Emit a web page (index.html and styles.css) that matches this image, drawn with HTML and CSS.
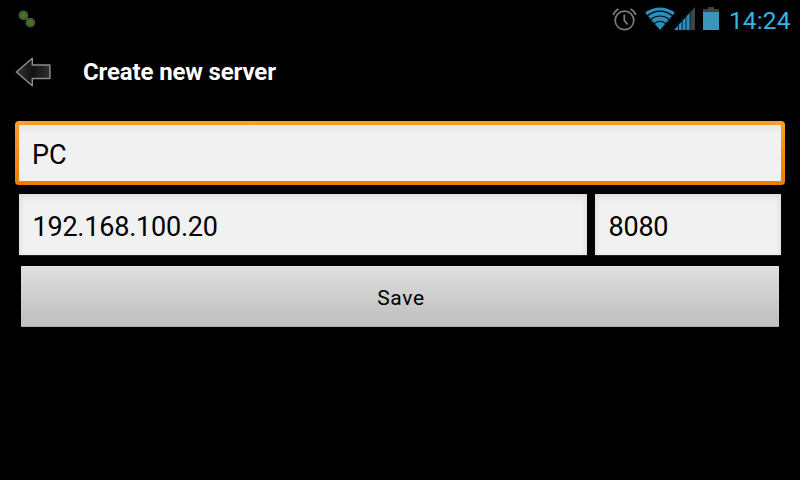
FILE: index.html
```
<!DOCTYPE html>
<html lang="en">
<head>
<meta charset="utf-8">
<title>Create new server</title>
<link rel="stylesheet" href="styles.css">
</head>
<body>
<header class="status">
  <svg class="notify" width="20" height="20" viewBox="0 0 20 20"><g fill="#3f7d02" stroke="#4a5048" stroke-width="2"><circle cx="6.4" cy="6.3" r="3.9"/><circle cx="13.4" cy="13.6" r="3.9"/></g><path d="M8.5 10.2Q10 9.4 11.4 9.8" stroke="#4a5048" stroke-width="2" fill="none"/></svg>
  <svg class="alarm" width="26" height="26" viewBox="0 0 26 26" fill="none" stroke="#7c7c7c" stroke-width="1.7"><circle cx="12.5" cy="13.4" r="9.3"/><path d="M12.3 7.5v6l3.3 4M1.2 8Q2.5 4 6.5 2M18.5 2Q22.5 4 23.8 8"/></svg>
  <svg class="wifi" width="30" height="24" viewBox="0 0 30 24"><path d="M0 5.5Q15-4.5 30 5.5L15 23Z" fill="#2b8fbd"/><g fill="none" stroke="#000" stroke-width="1.1"><path d="M2 9Q15-.7 28 9M5 13Q15 5 25 13M8.5 17Q15 11.5 21.5 17"/></g></svg>
  <svg class="signal" width="22" height="24" viewBox="0 0 22 24"><path d="M16 5.5L21 0V23H16Z" fill="#424242"/><path d="M0 23L16 5.5V23Z" fill="#2b8fbd"/><path d="M4.5 15v8M8.2 11v12M12 8v15M16 4v19" stroke="#0b2633" stroke-width="1"/></svg>
  <svg class="battery" width="16" height="24" viewBox="0 0 16 24"><path d="M5 0h6v2h5v4H0V2h5Z" fill="#424242"/><path d="M0 5h16V23H0Z" fill="#3995ba"/></svg>
  <time class="clock">14:24</time>
</header>
<nav class="bar">
  <svg class="back" width="36" height="30" viewBox="0 0 36 30"><defs><linearGradient id="g" x2="1" y2="0"><stop stop-color="#333"/><stop offset=".5" stop-color="#121212"/><stop offset="1" stop-color="#303030"/></linearGradient></defs><path d="M1.4 15L17.3 1.2V8H34.9V21.5H17.3V28.8Z" fill="url(#g)" stroke="#8c8c8c" stroke-width="1.5" stroke-linejoin="round"/></svg>
  <h1 class="title">Create new server</h1>
</nav>
<main class="form">
  <div class="field focused"><span class="value">PC</span></div>
  <div class="row">
    <div class="field"><span class="value digits">192.168.100.20</span></div>
    <div class="field port"><span class="value digits">8080</span></div>
  </div>
  <button class="save">Save</button>
</main>
</body>
</html>
```
FILE: styles.css
```
* { box-sizing: border-box; }
body {
  margin: 0;
  height: 480px;
  overflow: hidden;
  background: #000;
  font-family: Roboto, sans-serif;
}
.status {
  display: flex;
  align-items: flex-start;
  height: 38px;
  padding: 7px 7px 0 17px;
}
.notify { margin-top: 2px; }
.alarm { margin-left: auto; }
.wifi { margin-left: 7px; }
.signal { margin-left: -1px; }
.battery { margin-left: 7px; }
.clock {
  width: 64px;
  margin-left: 10px;
  color: #33b5e5;
  font-size: 24.5px;
  line-height: 27px;
  letter-spacing: .1px;
  white-space: nowrap;
}
.bar {
  display: flex;
  align-items: center;
  height: 68px;
  padding-left: 15px;
}
.title {
  margin: 0 0 0 32px;
  color: #fff;
  font-size: 24px;
  line-height: 28px;
  font-weight: 700;
  letter-spacing: -.14px;
  white-space: nowrap;
}
.form { padding: 15px 15px 0; }
.field {
  flex: 1;
  height: 61px;
  padding: 0 14px;
  background: #f1f1f1;
  box-shadow: inset 0 5px 7px -2px #dcdcdc, inset 3px 0 6px -3px #d8d8d8, inset -3px 0 6px -3px #d8d8d8, 0 1px #222;
}
.field.focused {
  height: 64px;
  padding: 4px 17px;
  border-radius: 4px;
  background:
    linear-gradient(#e6e6e6, #f1f1f1 8px) 4px 4px / calc(100% - 8px) calc(100% - 8px) no-repeat,
    linear-gradient(#ff9f2e, #f07a00);
  box-shadow: none;
}
.value {
  display: block;
  color: #000;
  font-size: 27px;
  line-height: 66px;
  white-space: nowrap;
}
.digits {
  margin-left: -.5px;
  letter-spacing: -.22px;
}
.focused .value { line-height: 60px; }
.row {
  display: flex;
  gap: 8px;
  margin: 9px 4px 0;
}
.port { flex: 0 0 186px; }
.save {
  display: block;
  width: 758px;
  height: 61px;
  margin: 11px 6px 0;
  padding: 2px 0 0 2px;
  border: 0;
  border-radius: 1px;
  background: linear-gradient(#dfdfdf, #c2c2c2 85%, #c2c2c2);
  box-shadow: inset 0 1px #e4e4e4, inset 0 -1px #aaa;
  color: #000;
  font: 21px Roboto, sans-serif;
  letter-spacing: .7px;
}
```
